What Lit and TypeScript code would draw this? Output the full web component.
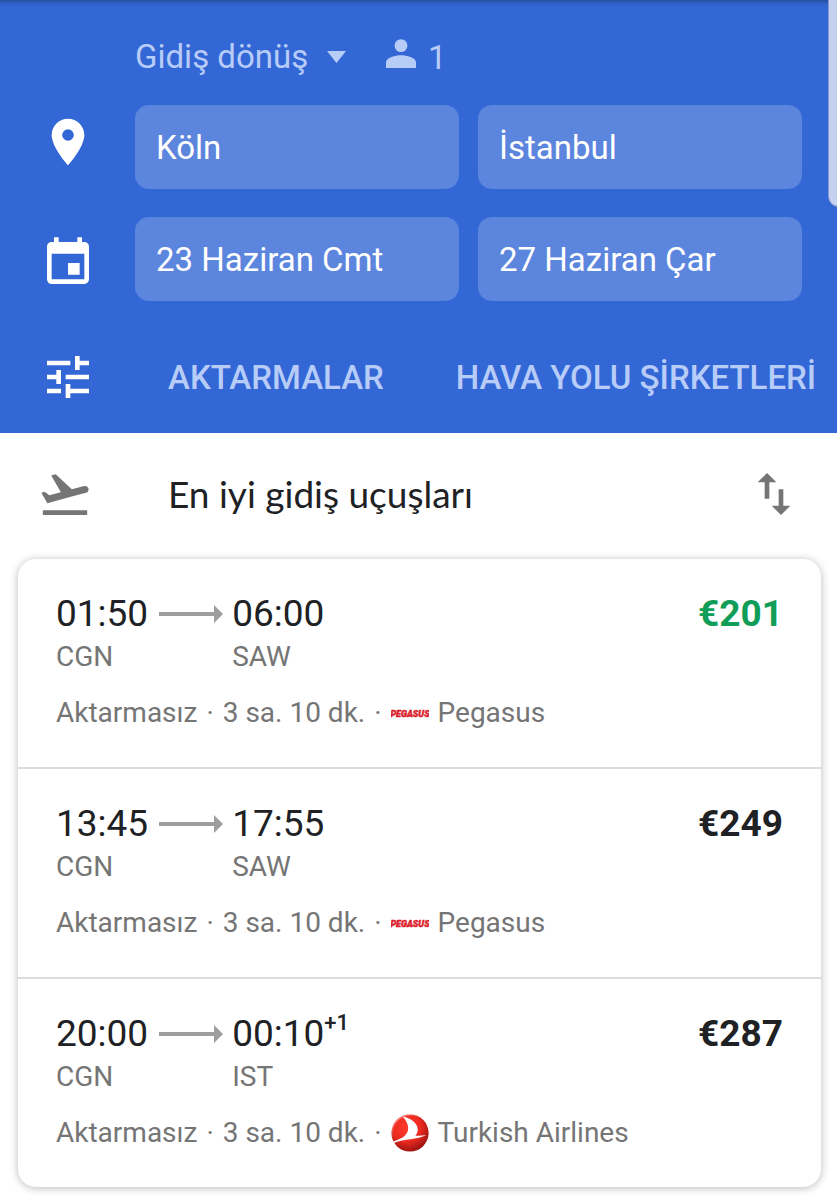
import { LitElement, html, svg, css, nothing } from "lit";
import { customElement, property } from "lit/decorators.js";

interface Flight {
  departs: string;
  from: string;
  arrives: string;
  to: string;
  dayShift?: string;
  stops: string;
  duration: string;
  airline: "Pegasus" | "Turkish Airlines";
  price: string;
  best?: boolean;
}

const FLIGHTS: Flight[] = [
  { departs: "01:50", from: "CGN", arrives: "06:00", to: "SAW", stops: "Aktarmasız", duration: "3 sa. 10 dk.", airline: "Pegasus", price: "€201", best: true },
  { departs: "13:45", from: "CGN", arrives: "17:55", to: "SAW", stops: "Aktarmasız", duration: "3 sa. 10 dk.", airline: "Pegasus", price: "€249" },
  { departs: "20:00", from: "CGN", arrives: "00:10", to: "IST", dayShift: "+1", stops: "Aktarmasız", duration: "3 sa. 10 dk.", airline: "Turkish Airlines", price: "€287" },
];

const ICONS = {
  place: svg`<path d="M12 2C8.13 2 5 5.13 5 9c0 5.25 7 13 7 13s7-7.75 7-13c0-3.87-3.13-7-7-7zm0 9.5a2.5 2.5 0 0 1 0-5 2.5 2.5 0 0 1 0 5z"/>`,
  event: svg`<path d="M17 12h-5v5h5v-5zM16 1v2H8V1H6v2H5c-1.11 0-1.99.9-1.99 2L3 19a2 2 0 0 0 2 2h14c1.1 0 2-.9 2-2V5c0-1.1-.9-2-2-2h-1V1h-2zm3 18H5V8h14v11z"/>`,
  tune: svg`<path d="M3 17v2h6v-2H3zM3 5v2h10V5H3zm10 16v-2h8v-2h-8v-2h-2v6h2zM7 9v2H3v2h4v2h2V9H7zm14 4v-2H11v2h10zm-6-4h2V7h4V5h-4V3h-2v6z"/>`,
  takeoff: svg`<path d="M2.5 19h19v2h-19zm19.57-9.36c-.21-.8-1.04-1.28-1.84-1.06L14.92 10l-6.9-6.43-1.93.51 4.14 7.17-4.97 1.33-1.97-1.54-1.45.39 1.82 3.16.77 1.33 1.6-.43 5.31-1.42 4.35-1.16L21 11.49c.81-.23 1.28-1.05 1.07-1.85z"/>`,
  swap: svg`<path d="M16 17.01V10h-2v7.01h-3L15 21l4-3.99h-3zM9 3L5 6.99h3V14h2V6.99h3L9 3z"/>`,
  person: svg`<circle cx="12" cy="5.8" r="3.5"/><path d="M12 11.1c-2.9 0-8.2 1.3-8.2 4V18h16.4v-2.9c0-2.7-5.3-4-8.2-4z"/>`,
};

const icon = (name: keyof typeof ICONS) =>
  html`<svg class="icon" viewBox="0 0 24 24" aria-hidden="true">${ICONS[name]}</svg>`;

@customElement("airline-logo")
export class AirlineLogo extends LitElement {
  @property() airline = "";

  static styles = css`
    :host { display: flex; flex: none; }
    svg { display: block; width: 38px; height: 38px; }
    .pegasus { font: italic 900 9px Roboto, "Liberation Sans", sans-serif; fill: #dc1f2e; stroke: #dc1f2e; stroke-width: 0.5px; }
  `;

  render() {
    if (this.airline === "Pegasus") {
      return html`<svg viewBox="0 0 38 38" aria-hidden="true"><text class="pegasus" x="19" y="23" text-anchor="middle">PEGASUS</text></svg>`;
    }
    return html`
      <svg viewBox="0 0 38 38" aria-hidden="true">
        <defs>
          <radialGradient id="ball" cx="0.42" cy="0.35" r="0.68">
            <stop offset="0" stop-color="#ff3b2c" />
            <stop offset="0.55" stop-color="#ec2a20" />
            <stop offset="1" stop-color="#96120f" />
          </radialGradient>
          <linearGradient id="gloss" x1="0" y1="0" x2="0.7" y2="0.8">
            <stop offset="0" stop-color="#fff" stop-opacity="0.55" />
            <stop offset="0.5" stop-color="#fff" stop-opacity="0" />
          </linearGradient>
        </defs>
        <circle cx="19" cy="19" r="18.6" fill="url(#ball)" />
        <circle cx="19" cy="19" r="17.8" fill="none" stroke="url(#gloss)" stroke-width="1.6" />
        <path fill="#fff" d="M11.500 2.500C19.500 4 26.800 9.200 26.800 15.500c0 2.600-1 4.700-2.500 6.200 4 .3 7.700-.1 11.200-.7C26 26 13.500 24.500 3.200 28.800 2.300 29.100 1.600 28 2.500 27.500c4-1.900 8-2.800 11-5.500 3.400-3 4.300-6.800 3.200-11C15.800 7.800 14 5 11.500 2.500z" />
      </svg>
    `;
  }
}

@customElement("flight-row")
export class FlightRow extends LitElement {
  @property({ attribute: false }) flight!: Flight;

  static styles = css`
    :host { display: block; padding: 33px 38px 35px; }
    .top { display: flex; align-items: flex-start; justify-content: space-between; }
    .route { display: grid; grid-template-columns: auto 66px auto; column-gap: 9px; row-gap: 3px; align-items: center; }
    .time { font-size: 37px; line-height: 44px; color: #202124; white-space: nowrap; display: flex; }
    .shift { font-size: 22px; line-height: 22px; font-weight: 500; }
    .arrow { display: block; width: 66px; height: 18px; fill: #9e9e9e; }
    .code { font-size: 28px; line-height: 36px; color: #757575; }
    .to { grid-column: 3; }
    .price { font-size: 37px; line-height: 44px; font-weight: 700; color: #202124; }
    .best { color: #0f9d58; }
    .details { display: flex; align-items: center; gap: 9px; margin-top: 18px; height: 39px; font-size: 28px; line-height: 39px; color: #757575; white-space: nowrap; }
  `;

  render() {
    const f = this.flight;
    return html`
      <div class="top">
        <div class="route">
          <span class="time">${f.departs}</span>
          <svg class="arrow" viewBox="0 0 66 18" aria-hidden="true"><path d="M2 7h55V0l9 9-9 9v-7H2z" /></svg>
          <span class="time">${f.arrives}${f.dayShift ? html`<span class="shift">${f.dayShift}</span>` : nothing}</span>
          <span class="code">${f.from}</span>
          <span class="code to">${f.to}</span>
        </div>
        <span class="price ${f.best ? "best" : ""}">${f.price}</span>
      </div>
      <div class="details">
        <span>${f.stops}</span>
        <span>·</span>
        <span>${f.duration}</span>
        <span>·</span>
        <airline-logo airline=${f.airline}></airline-logo>
        <span>${f.airline}</span>
      </div>
    `;
  }
}

@customElement("app-root")
export class AppRoot extends LitElement {
  static styles = css`
    :host { display: block; min-height: 100vh; background: #fff; font-family: Roboto, sans-serif; overflow: hidden; position: relative; }
    * { box-sizing: border-box; }
    button, select, input { font: inherit; color: inherit; border: 0; margin: 0; padding: 0; background: none; }
    .icon { display: block; flex: none; width: 56px; height: 56px; fill: currentColor; }
    header { display: flex; flex-direction: column; padding: 29px 0 28px; color: #fff; font-size: 33px;
      background: linear-gradient(#27509f, #2e60c4 3px, #3367d6 7px); }
    .trip { display: flex; align-items: center; height: 56px; margin-bottom: 20px; padding-left: 135px; color: #b8ccf8; }
    .kind { display: flex; align-items: center; gap: 18px; }
    .kind select { appearance: none; line-height: 40px; }
    .caret { width: 19px; height: 12px; fill: currentColor; }
    .people { display: flex; align-items: center; gap: 5px; margin-left: 33px; }
    .people .icon { width: 44px; height: 44px; }
    .row { display: grid; grid-template-columns: 76px 1fr 1fr; column-gap: 19px; align-items: center; padding: 0 35px 0 40px; margin-bottom: 28px; }
    .place { margin-bottom: 10px; }
    .date { margin-top: 8px; }
    .field { width: 100%; height: 84px; padding: 0 21px; border-radius: 14px; background: #5c85de; }
    .filters { display: flex; align-items: center; height: 56px; margin-top: 20px; padding-left: 40px; overflow: hidden; }
    .tabs { display: flex; gap: 72px; margin-left: 72px; color: #b8ccf8; font-weight: 500; white-space: nowrap; }
    .heading { display: flex; align-items: center; padding: 33px 35px 37px 37px; color: #757575; }
    h1 { flex: 1; margin: 0 0 0 75px; font: 400 37px/56px Lato, Roboto, sans-serif; color: #202124; }
    .card { list-style: none; margin: 0 16px 12px 18px; padding: 0; border-radius: 18px; background: #fff; box-shadow: 0 1px 8px rgba(0, 0, 0, 0.28); }
    .card li + li { border-top: 2px solid #dcdcdc; }
    .edge { position: absolute; top: -20px; right: -12px; width: 21px; height: 227px; border-radius: 14px; background: #c5d1f0; border: 1px solid #8499cc; }
  `;

  render() {
    return html`
      <header>
        <div class="trip">
          <label class="kind">
            <select aria-label="Yolculuk türü"><option>Gidiş dönüş</option></select>
            <svg class="caret" viewBox="0 0 19 12" aria-hidden="true"><path d="M0 0h19L9.5 12z" /></svg>
          </label>
          <button class="people" aria-label="Yolcu sayısı: 1">${icon("person")}<span>1</span></button>
        </div>
        <div class="row">
          <div class="place">${icon("place")}</div>
          <input class="field" aria-label="Nereden" value="Köln" />
          <input class="field" aria-label="Nereye" value="İstanbul" />
        </div>
        <div class="row">
          <div class="date">${icon("event")}</div>
          <input class="field" aria-label="Gidiş tarihi" value="23 Haziran Cmt" />
          <input class="field" aria-label="Dönüş tarihi" value="27 Haziran Çar" />
        </div>
        <div class="filters">
          ${icon("tune")}
          <nav class="tabs">
            <button>AKTARMALAR</button>
            <button>HAVA YOLU ŞİRKETLERİ</button>
          </nav>
        </div>
      </header>
      <main>
        <div class="heading">
          ${icon("takeoff")}
          <h1>En iyi gidiş uçuşları</h1>
          <button aria-label="Sırala">${icon("swap")}</button>
        </div>
        <ul class="card">
          ${FLIGHTS.map((f) => html`<li><flight-row .flight=${f}></flight-row></li>`)}
        </ul>
      </main>
      <div class="edge"></div>
    `;
  }
}
